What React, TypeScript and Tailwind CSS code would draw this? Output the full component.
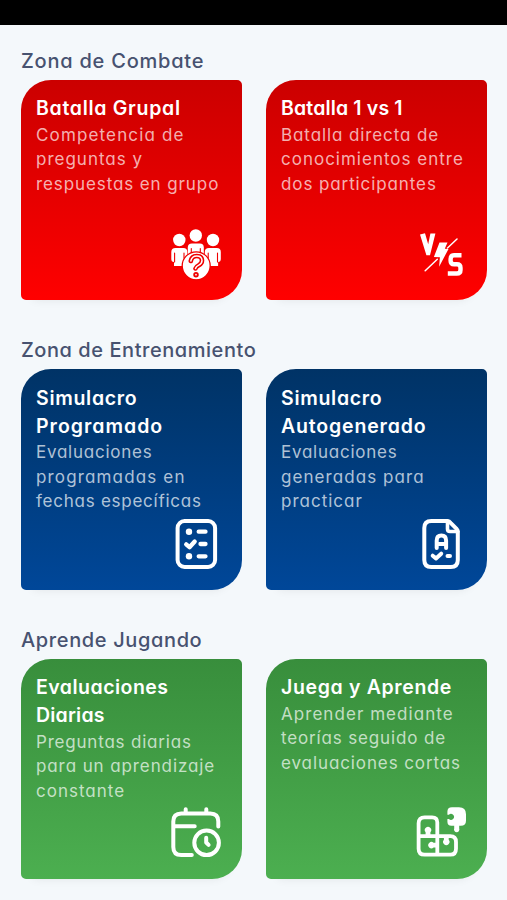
import type { ReactNode } from "react";

interface Line {
  text: string;
  className: string;
}

interface ZoneCardProps {
  title: Line[];
  description: Line[];
  gradient: string;
  icon: ReactNode;
}

const IconFrame = ({ children }: { children: ReactNode }) => (
  <svg
    viewBox="0 0 50 50"
    className="mt-auto h-[50px] w-[50px] shrink-0 self-end overflow-visible"
    fill="none"
    stroke="white"
    strokeWidth="4"
    strokeLinecap="round"
    strokeLinejoin="round"
  >
    {children}
  </svg>
);

const GroupIcon = () => (
  <IconFrame>
    <g fill="white" stroke="none">
      <circle cx="8.3" cy="11" r="6.2" />
      <circle cx="24.8" cy="6.5" r="6.2" />
      <circle cx="42" cy="11" r="6.2" />
      <path d="M4.5 19h7.8q4 0 4 4v14H3V33Q.3 33 .3 30V23q0-4 4.2-4z" />
      <path d="M38 19h7.8q4 0 4 4v7q0 3-2.7 3v4H33.8V23q0-4 4.2-4z" />
      <path d="M21 14.5h7.8q4 0 4 4V27h-16v-8.5q0-4 4.2-4z" />
    </g>
    <path
      d="M3.6 24v9M13 24v5M37.2 24v5M46.5 24v9M20.3 19.5v4M29.3 19.5v4"
      stroke="#ef0000"
      strokeWidth="1.1"
    />
    <circle cx="25.2" cy="36.8" r="14" fill="white" stroke="#f00000" strokeWidth="1.3" />
    <path d="M19.8 32q1-5 6-5 5 0 5.2 4.4 0 3-3.2 4.8-2.8 1.4-3.3 3.3" stroke="#ef0000" strokeWidth="4.6" />
    <path d="M19.8 32q1-5 6-5 5 0 5.2 4.4 0 3-3.2 4.8-2.8 1.4-3.3 3.3" strokeWidth="1.5" />
    <circle cx="25" cy="45.7" r="1.8" stroke="#ef0000" strokeWidth="1.9" />
  </IconFrame>
);

const VersusIcon = () => (
  <IconFrame>
    <path d="M4 5.5l5-1.2 3.2 11 2.2-10.8h5L14 26.3h-3.6z" fill="white" stroke="none" />
    <path d="M23.5 13.5h8l-2.7 6.2 3.7.3-9.4 17.7.8-9.4-6-.4z" fill="white" stroke="none" />
    <path d="M41 10l-9.5 9M9.2 41.7L21.3 30.2" strokeWidth="1.5" />
    <path
      d="M45.5 26.3h-7.3q-3.6 0-3.6 3.6v1.8q0 3.6 3.6 3.6h2.6q3.7 0 3.7 3.4v2.2q0 3.6-3.7 3.6h-9"
      strokeWidth="4.4"
      strokeLinecap="butt"
    />
  </IconFrame>
);

const ChecklistIcon = () => (
  <IconFrame>
    <rect x="6.6" y="2" width="37.5" height="46" rx="7" />
    <g fill="white" stroke="none">
      <circle cx="18" cy="12.7" r="3.2" />
      <circle cx="18" cy="37.3" r="3.2" />
    </g>
    <path d="M27.7 12.7h6.8M29.5 25h5M27.7 37.3h6.8M15.2 25.3l3.3 2.9 5.2-5.7" strokeWidth="4.3" />
  </IconFrame>
);

const ExamIcon = () => (
  <IconFrame>
    <path d="M31.5 2H15.3q-7 0-7 7v32q0 7 7 7h19.5q7 0 7-7V12.5q0-1.5-1.2-2.7l-6-6Q33.4 2 31.5 2z" />
    <path d="M31.5 2v8q0 2.5 2.5 2.5h7.8" strokeWidth="3.6" />
    <path d="M20.7 29V21.5q0-5 4.7-5t4.7 5V29M20.7 25h9.4" />
    <path d="M16.7 36.7l3.3 2.7 5.2-4.7M31.5 37h2.5" />
  </IconFrame>
);

const ScheduleIcon = () => (
  <IconFrame>
    <path d="M47.3 18.5V13.5q0-8-8-8h-29q-8 0-8 8v25.5q0 8 8 8h10.5M3 18.2h20.7M14.7 1.3v4M35.3 1.3v4" />
    <circle cx="35.6" cy="34.8" r="12.3" />
    <path d="M35.2 29.8v4.7l2.4 2.4" />
  </IconFrame>
);

const PuzzleIcon = () => (
  <IconFrame>
    <path
      d="M21.3 28V14.5q0-5.2-5.2-5.2H8.6q-6 0-6 6v25.4q0 6 6 6h25.7q5.7 0 5.7-6V34q0-5.8-5.7-5.8H2.6M21.3 28v18.7"
      strokeWidth="3.8"
    />
    <g fill="white" stroke="none">
      <path d="M9.6 28v-3.8a3.2 3.2 0 1 1 4.8 0V28z" />
      <path d="M21 34.8h-3.4a3.2 3.2 0 1 0 0 4.8H21z" />
      <path d="M27.9 28.5v3.2a3.2 3.2 0 1 0 4.8 0v-3.2z" />
      <path d="M31.4 3.5Q31.4-.8 36-.8h7q7 0 7 7v6.5q0 5-5.2 5h-1.6v2.8a2.7 2.7 0 1 1-5 0v-2.8h-2.8q-4 0-4-4v-2.6h1.5a3 3 0 1 0 0-4.4h-1.5z" />
    </g>
  </IconFrame>
);

const ZoneCard = ({ title, description, gradient, icon }: ZoneCardProps) => (
  <article
    className={`flex h-[220.5px] w-[221px] shrink-0 flex-col rounded-tl-[30px] rounded-tr-[5px] rounded-br-[30px] rounded-bl-[5px] bg-linear-to-b pt-[14.5px] pr-[21px] pb-[21px] pl-[15px] whitespace-nowrap shadow-[0_12px_10px_-12px_rgba(0,0,0,0.08)] ${gradient}`}
  >
    <h3 className="text-[19.5px] leading-[28px] font-semibold text-white">
      {title.map((line) => (
        <span key={line.text} className={`block ${line.className}`}>
          {line.text}
        </span>
      ))}
    </h3>
    <p className="-mb-2 pt-[0.5px] text-[17px] leading-[24.5px] text-white/70">
      {description.map((line) => (
        <span key={line.text} className={`block ${line.className}`}>
          {line.text}
        </span>
      ))}
    </p>
    {icon}
  </article>
);

const Zone = ({ heading, className, children }: { heading: string; className: string; children: ReactNode }) => (
  <section className="h-[289.5px]">
    <h2 className={`h-[30px] text-[20px] leading-[30px] font-medium whitespace-nowrap text-[#475270] ${className}`}>
      {heading}
    </h2>
    <div className="mt-[4px] flex gap-6">{children}</div>
  </section>
);

const RED = "from-[#cb0000] to-[#ff0000]";
const BLUE = "from-[#003366] to-[#004799]";
const GREEN = "from-[#388e3c] to-[#4caf50]";

export default function App() {
  return (
    <div className="h-[900px] w-[507px] overflow-hidden bg-[#f4f8fb] font-['Inter',sans-serif] [font-feature-settings:'cv11']">
      <div className="h-[25px] bg-black" />
      <main className="pt-[20.5px] pr-5 pl-[21px]">
        <Zone heading="Zona de Combate" className="tracking-[0.77px]">
          <ZoneCard
            gradient={RED}
            icon={<GroupIcon />}
            title={[{ text: "Batalla Grupal", className: "tracking-[0.7px]" }]}
            description={[
              { text: "Competencia de", className: "tracking-[1.15px]" },
              { text: "preguntas y", className: "tracking-[1px]" },
              { text: "respuestas en grupo", className: "tracking-[0.9px]" },
            ]}
          />
          <ZoneCard
            gradient={RED}
            icon={<VersusIcon />}
            title={[{ text: "Batalla 1 vs 1", className: "tracking-[0.15px]" }]}
            description={[
              { text: "Batalla directa de", className: "tracking-[0.9px]" },
              { text: "conocimientos entre", className: "tracking-[1px]" },
              { text: "dos participantes", className: "tracking-[0.9px]" },
            ]}
          />
        </Zone>
        <Zone heading="Zona de Entrenamiento" className="tracking-[0.55px]">
          <ZoneCard
            gradient={BLUE}
            icon={<ChecklistIcon />}
            title={[
              { text: "Simulacro", className: "tracking-[0.7px]" },
              { text: "Programado", className: "tracking-[1px]" },
            ]}
            description={[
              { text: "Evaluaciones", className: "tracking-[0.75px]" },
              { text: "programadas en", className: "tracking-[1.15px]" },
              { text: "fechas específicas", className: "tracking-[0.75px]" },
            ]}
          />
          <ZoneCard
            gradient={BLUE}
            icon={<ExamIcon />}
            title={[
              { text: "Simulacro", className: "tracking-[0.7px]" },
              { text: "Autogenerado", className: "tracking-[0.83px]" },
            ]}
            description={[
              { text: "Evaluaciones", className: "tracking-[0.75px]" },
              { text: "generadas para", className: "tracking-[1.07px]" },
              { text: "practicar", className: "tracking-[1px]" },
            ]}
          />
        </Zone>
        <Zone heading="Aprende Jugando" className="tracking-[0.63px]">
          <ZoneCard
            gradient={GREEN}
            icon={<ScheduleIcon />}
            title={[
              { text: "Evaluaciones", className: "tracking-[0.48px]" },
              { text: "Diarias", className: "tracking-[0.2px]" },
            ]}
            description={[
              { text: "Preguntas diarias", className: "tracking-[0.8px]" },
              { text: "para un aprendizaje", className: "tracking-[0.9px]" },
              { text: "constante", className: "tracking-[1px]" },
            ]}
          />
          <ZoneCard
            gradient={GREEN}
            icon={<PuzzleIcon />}
            title={[{ text: "Juega y Aprende", className: "tracking-[0.65px]" }]}
            description={[
              { text: "Aprender mediante", className: "tracking-[1.05px]" },
              { text: "teorías seguido de", className: "tracking-[0.85px]" },
              { text: "evaluaciones cortas", className: "tracking-[0.9px]" },
            ]}
          />
        </Zone>
      </main>
    </div>
  );
}
